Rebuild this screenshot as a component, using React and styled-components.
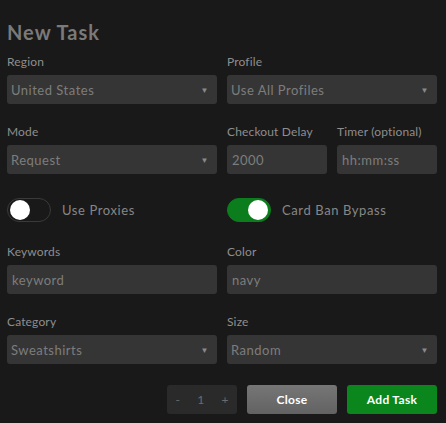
import React from 'react'
import styled, { createGlobalStyle } from 'styled-components'

const GlobalStyle = createGlobalStyle`
  html, body {
    margin: 0;
    padding: 0;
    background: #191919;
  }
  body {
    font-family: Lato, "Open Sans", "Liberation Sans", sans-serif;
  }
`

const Panel = styled.div`
  width: 446px;
  height: 423px;
  box-sizing: border-box;
  padding: 20px 9px 0 7px;
  display: flex;
  flex-direction: column;
  background: #191919;
`

const Title = styled.h1`
  margin: 0 0 11px;
  font-size: 20px;
  line-height: 24px;
  font-weight: 700;
  letter-spacing: 1px;
  color: #7a7a7a;
`

const Row = styled.div`
  display: grid;
  grid-template-columns: 1fr 1fr;
  column-gap: 10px;
  margin-bottom: ${p => p.$mb || 21}px;
`

const SubRow = styled.div`
  display: grid;
  grid-template-columns: 1fr 1fr;
  column-gap: 10px;
`

const Field = styled.div`
  display: flex;
  flex-direction: column;
`

const Label = styled.label`
  font-size: 12px;
  line-height: 14px;
  letter-spacing: 0.15px;
  color: #8e8e8e;
  margin-bottom: 6px;
  white-space: nowrap;
`

const Box = styled.div`
  height: 29px;
  box-sizing: border-box;
  background: #353535;
  border-radius: 3px;
  display: flex;
  align-items: center;
  justify-content: space-between;
  padding: 0 ${p => (p.$select ? 8 : 5)}px 0 ${p => (p.$select ? 4 : 5)}px;
  font-size: 13px;
  letter-spacing: 0.5px;
  color: #7d7d7d;
`

const Arrow = styled.span`
  font-size: 8px;
  color: #8a8a8a;
`

const ToggleItem = styled.div`
  display: flex;
  align-items: center;
  gap: 11px;
  font-size: 13px;
  letter-spacing: 0.6px;
  color: #878787;
`

const Track = styled.div`
  width: 44px;
  height: 24px;
  box-sizing: border-box;
  border-radius: 12px;
  display: flex;
  align-items: center;
  padding: 0 2px;
  justify-content: ${p => (p.$on ? 'flex-end' : 'flex-start')};
  background: ${p => (p.$on ? '#0b7d1c' : '#191919')};
  border: 1px solid ${p => (p.$on ? '#0b7d1c' : '#3a3a3a')};
`

const Knob = styled.div`
  width: 20px;
  height: 20px;
  border-radius: 50%;
  background: #fff;
`

const Footer = styled.div`
  display: flex;
  justify-content: flex-end;
  gap: 10px;
`

const Stepper = styled.div`
  width: 70px;
  height: 29px;
  background: #2a2a2a;
  border-radius: 3px;
  display: flex;
  align-items: center;
  justify-content: space-around;
  font-size: 12px;
  color: #6c6c6c;
`

const Button = styled.button`
  width: 90px;
  height: 29px;
  border: none;
  border-radius: 3px;
  font-family: inherit;
  font-size: 12px;
  font-weight: 700;
  letter-spacing: 0.3px;
  color: #fff;
  background: ${p =>
    p.$primary ? '#0b861c' : 'linear-gradient(#767676, #626262)'};
`

function Select({ value }) {
  return (
    <Box $select>
      <span>{value}</span>
      <Arrow>▼</Arrow>
    </Box>
  )
}

function Toggle({ on, label }) {
  return (
    <ToggleItem>
      <Track $on={on}>
        <Knob />
      </Track>
      {label}
    </ToggleItem>
  )
}

export default function App() {
  return (
    <>
      <GlobalStyle />
      <Panel>
        <Title>New Task</Title>
        <Row>
          <Field>
            <Label>Region</Label>
            <Select value="United States" />
          </Field>
          <Field>
            <Label>Profile</Label>
            <Select value="Use All Profiles" />
          </Field>
        </Row>
        <Row $mb={24}>
          <Field>
            <Label>Mode</Label>
            <Select value="Request" />
          </Field>
          <SubRow>
            <Field>
              <Label>Checkout Delay</Label>
              <Box>2000</Box>
            </Field>
            <Field>
              <Label>Timer (optional)</Label>
              <Box>hh:mm:ss</Box>
            </Field>
          </SubRow>
        </Row>
        <Row $mb={23}>
          <Toggle label="Use Proxies" />
          <Toggle on label="Card Ban Bypass" />
        </Row>
        <Row>
          <Field>
            <Label>Keywords</Label>
            <Box>keyword</Box>
          </Field>
          <Field>
            <Label>Color</Label>
            <Box>navy</Box>
          </Field>
        </Row>
        <Row>
          <Field>
            <Label>Category</Label>
            <Select value="Sweatshirts" />
          </Field>
          <Field>
            <Label>Size</Label>
            <Select value="Random" />
          </Field>
        </Row>
        <Footer>
          <Stepper>
            <span>-</span>
            <span>1</span>
            <span>+</span>
          </Stepper>
          <Button>Close</Button>
          <Button $primary>Add Task</Button>
        </Footer>
      </Panel>
    </>
  )
}
